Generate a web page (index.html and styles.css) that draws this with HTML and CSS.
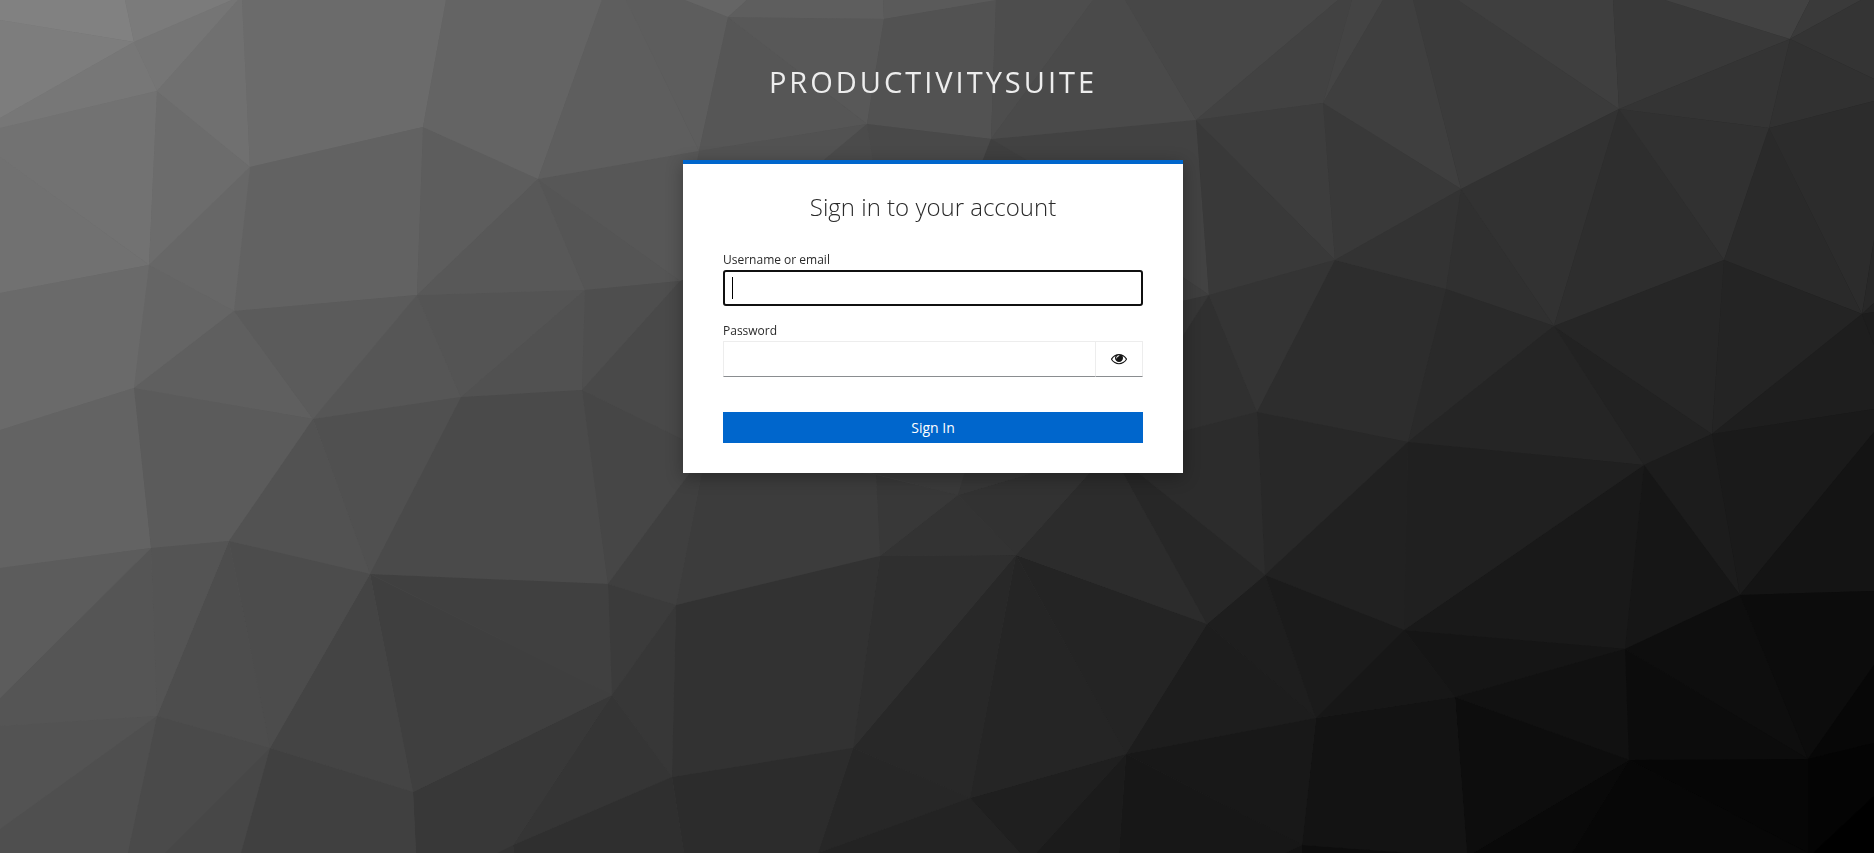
FILE: index.html
```html
<!DOCTYPE html>
<html lang="en">
<head>
<meta charset="utf-8">
<title>Sign in to ProductivitySuite</title>
<link rel="stylesheet" href="styles.css">
</head>
<body>
<svg class="backdrop" viewBox="0 0 1874 853" preserveAspectRatio="xMidYMid slice" aria-hidden="true">
  <!-- top left -->
  <polygon fill="#818181" points="0,0 125,0 134,42 0,20"/>
  <polygon fill="#7d7d7d" points="0,20 134,42 0,118"/>
  <polygon fill="#7b7b7b" points="125,0 134,42 232,0"/>
  <polygon fill="#757575" points="134,42 232,0 238,0 157,91"/>
  <polygon fill="#777777" points="134,42 157,91 0,128 0,118"/>
  <polygon fill="#727272" points="0,128 157,91 149,265 0,157"/>
  <polygon fill="#717171" points="0,157 149,265 0,293"/>
  <polygon fill="#6c6c6c" points="157,91 250,167 149,265"/>
  <polygon fill="#707070" points="157,91 238,0 242,0 250,167"/>
  <polygon fill="#6b6b6b" points="250,167 242,0 446,0 423,127"/>
  <polygon fill="#626262" points="250,167 423,127 417,295 234,311"/>
  <polygon fill="#676767" points="250,167 234,311 149,265"/>
  <polygon fill="#656565" points="149,265 234,311 134,388"/>
  <polygon fill="#6a6a6a" points="0,293 149,265 134,388 0,430"/>
  <polygon fill="#636363" points="0,430 134,388 151,548 0,568"/>
  <polygon fill="#5f5f5f" points="134,388 313,419 234,311"/>
  <polygon fill="#5b5b5b" points="234,311 313,419 417,295"/>
  <polygon fill="#5b5b5b" points="134,388 313,419 229,541 151,548"/>
  <polygon fill="#565656" points="313,419 417,295 461,397"/>
  <polygon fill="#505050" points="313,419 461,397 370,574"/>
  <polygon fill="#525252" points="313,419 370,574 229,541"/>
  <polygon fill="#545454" points="417,295 461,397 585,290"/>
  <polygon fill="#515151" points="585,290 461,397 582,390"/>
  <polygon fill="#5d5d5d" points="423,127 538,179 417,295"/>
  <polygon fill="#646464" points="423,127 446,0 602,0 538,179"/>
  <polygon fill="#585858" points="417,295 538,179 585,290"/>
  <polygon fill="#555555" points="538,179 585,290 680,281"/>
  <polygon fill="#575757" points="538,179 699,151 694,180 694,290 680,281"/>
  <polygon fill="#5e5e5e" points="538,179 602,0 626,0 699,151"/>
  <polygon fill="#5d5d5d" points="626,0 685,0 728,17 699,151"/>
  <polygon fill="#4e4e4e" points="585,290 680,281 582,390"/>
  <polygon fill="#494949" points="680,281 706,270 706,451 582,390"/>
  <polygon fill="#4a4a4a" points="461,397 582,390 608,584 370,574"/>
  <polygon fill="#464646" points="582,390 706,451 608,584"/>
  <!-- top centre -->
  <polygon fill="#565656" points="728,17 699,151 867,124"/>
  <polygon fill="#585858" points="728,17 884,19 867,124"/>
  <polygon fill="#656565" points="685,0 728,17 747,0"/>
  <polygon fill="#5e5e5e" points="747,0 728,17 884,19 883,0"/>
  <polygon fill="#5a5a5a" points="883,0 884,19 1000,0"/>
  <polygon fill="#525252" points="884,19 867,124 991,139 996,0"/>
  <polygon fill="#525252" points="699,151 867,124 800,180 694,180"/>
  <polygon fill="#4b4b4b" points="867,124 800,180 876,180"/>
  <polygon fill="#494949" points="867,124 991,139 975,180 876,180"/>
  <polygon fill="#3f3f3f" points="991,139 975,180 1080,180"/>
  <polygon fill="#424242" points="991,139 1196,120 1209,295 1165,265 1060,180"/>
  <polygon fill="#4d4d4d" points="996,0 1093,0 991,139"/>
  <polygon fill="#4a4a4a" points="991,139 1093,0 1125,0 1196,120"/>
  <polygon fill="#474747" points="1125,0 1338,0 1196,120"/>
  <polygon fill="#424242" points="1196,120 1338,0 1352,0 1323,103"/>
  <polygon fill="#444444" points="1352,0 1383,0 1323,103"/>
  <polygon fill="#3f3f3f" points="1323,103 1383,0 1413,0 1461,189"/>
  <polygon fill="#3d3d3d" points="1196,120 1323,103 1335,260"/>
  <polygon fill="#393939" points="1196,120 1335,260 1209,295"/>
  <polygon fill="#393939" points="1323,103 1461,189 1335,260"/>
  <polygon fill="#3e3e3e" points="1165,265 1209,295 1165,305"/>
  <polygon fill="#363636" points="1209,295 1165,305 1110,450"/>
  <polygon fill="#303030" points="1209,295 1257,412 1110,450"/>
  <polygon fill="#343434" points="1209,295 1335,260 1257,412"/>
  <polygon fill="#2d2d2d" points="1335,260 1446,289 1408,442 1257,412"/>
  <polygon fill="#333333" points="1335,260 1461,189 1446,289"/>
  <polygon fill="#303030" points="1461,189 1554,326 1446,289"/>
  <polygon fill="#282828" points="1257,412 1408,442 1265,575"/>
  <polygon fill="#2c2c2c" points="1257,412 1265,575 1110,450"/>
  <!-- top right -->
  <polygon fill="#3b3b3b" points="1413,0 1458,0 1619,109 1461,189"/>
  <polygon fill="#3f3f3f" points="1458,0 1613,0 1619,109"/>
  <polygon fill="#393939" points="1613,0 1665,0 1790,39 1619,109"/>
  <polygon fill="#424242" points="1665,0 1810,0 1790,39"/>
  <polygon fill="#3a3a3a" points="1810,0 1861,0 1790,39"/>
  <polygon fill="#343434" points="1861,0 1874,0 1874,79 1790,39"/>
  <polygon fill="#313131" points="1790,39 1874,79 1874,101 1769,128"/>
  <polygon fill="#343434" points="1790,39 1769,128 1619,109"/>
  <polygon fill="#323232" points="1461,189 1619,109 1554,326"/>
  <polygon fill="#2e2e2e" points="1619,109 1724,260 1554,326"/>
  <polygon fill="#313131" points="1619,109 1769,128 1724,260"/>
  <polygon fill="#2a2a2a" points="1769,128 1862,314 1724,260"/>
  <polygon fill="#2c2c2c" points="1769,128 1874,101 1874,240 1862,314"/>
  <polygon fill="#2a2a2a" points="1446,289 1554,326 1408,442"/>
  <polygon fill="#252525" points="1554,326 1408,442 1644,465"/>
  <polygon fill="#222222" points="1554,326 1644,465 1712,434"/>
  <polygon fill="#262626" points="1554,326 1724,260 1712,434"/>
  <polygon fill="#242424" points="1724,260 1862,314 1712,434"/>
  <polygon fill="#1e1e1e" points="1862,314 1874,345 1874,409 1712,434"/>
  <polygon fill="#282828" points="1862,314 1874,240 1874,303"/>
  <polygon fill="#222222" points="1862,314 1874,303 1874,312"/>
  <polygon fill="#1d1d1d" points="1862,314 1874,312 1874,345"/>
  <!-- bottom right -->
  <polygon fill="#1a1a1a" points="1712,434 1874,409 1874,432 1740,595"/>
  <polygon fill="#1c1c1c" points="1644,465 1712,434 1740,595"/>
  <polygon fill="#141414" points="1740,595 1874,432 1874,591"/>
  <polygon fill="#161616" points="1644,465 1740,595 1625,649"/>
  <polygon fill="#191919" points="1644,465 1625,649 1404,630"/>
  <polygon fill="#202020" points="1408,442 1644,465 1404,630"/>
  <polygon fill="#212121" points="1265,575 1408,442 1404,630"/>
  <polygon fill="#151515" points="1404,630 1625,649 1455,697"/>
  <polygon fill="#111111" points="1625,649 1455,697 1629,760"/>
  <polygon fill="#0e0e0e" points="1740,595 1625,649 1808,759"/>
  <polygon fill="#0c0c0c" points="1625,649 1629,760 1808,759"/>
  <polygon fill="#0c0c0c" points="1740,595 1874,591 1874,665 1808,759"/>
  <polygon fill="#070707" points="1808,759 1874,665 1874,743"/>
  <polygon fill="#040404" points="1808,759 1874,743 1874,796 1813,853 1808,853"/>
  <polygon fill="#000000" points="1874,796 1874,853 1813,853"/>
  <polygon fill="#060606" points="1629,760 1808,759 1808,853"/>
  <polygon fill="#070707" points="1629,760 1808,853 1572,853"/>
  <polygon fill="#090909" points="1629,760 1572,853 1473,853"/>
  <polygon fill="#0d0d0d" points="1455,697 1629,760 1473,853 1467,853"/>
  <polygon fill="#131313" points="1316,718 1455,697 1467,853 1410,853 1302,845"/>
  <polygon fill="#0d0d0d" points="1302,845 1410,853 1302,853"/>
  <polygon fill="#131313" points="1302,845 1302,853 1285,853"/>
  <polygon fill="#1e1e1e" points="1207,624 1265,575 1316,718"/>
  <polygon fill="#1d1d1d" points="1207,624 1316,718 1126,754"/>
  <polygon fill="#1b1b1b" points="1265,575 1404,630 1316,718"/>
  <polygon fill="#171717" points="1404,630 1455,697 1316,718"/>
  <polygon fill="#181818" points="1126,754 1316,718 1302,845"/>
  <polygon fill="#171717" points="1126,754 1302,845 1285,853 1119,853"/>
  <polygon fill="#1b1b1b" points="1126,754 1119,853 1036,853"/>
  <polygon fill="#1f1f1f" points="970,798 1126,754 1036,853 1020,853"/>
  <!-- bottom centre -->
  <polygon fill="#242424" points="1016,555 1207,624 1126,754"/>
  <polygon fill="#252525" points="1016,555 1126,754 970,798"/>
  <polygon fill="#282828" points="1016,555 853,748 970,798"/>
  <polygon fill="#272727" points="853,748 970,798 818,853"/>
  <polygon fill="#232323" points="970,798 818,853 1020,853"/>
  <polygon fill="#2c2c2c" points="1016,555 1110,450 1207,624"/>
  <polygon fill="#272727" points="1110,450 1207,624 1265,575"/>
  <polygon fill="#2f2f2f" points="880,556 1016,555 853,748"/>
  <polygon fill="#323232" points="958,495 1016,555 1110,450"/>
  <polygon fill="#333333" points="880,556 958,495 1016,555"/>
  <polygon fill="#383838" points="880,556 876,475 958,495"/>
  <polygon fill="#3a3a3a" points="840,465 970,465 958,495"/>
  <polygon fill="#363636" points="958,495 967,465 1060,465"/>
  <polygon fill="#3c3c3c" points="706,451 876,475 880,556 676,605"/>
  <polygon fill="#3f3f3f" points="608,584 706,451 676,605"/>
  <polygon fill="#404040" points="370,574 608,584 612,695"/>
  <polygon fill="#3b3b3b" points="608,584 676,605 612,695"/>
  <polygon fill="#373737" points="676,605 612,695 672,777"/>
  <polygon fill="#323232" points="676,605 880,556 853,748 672,777"/>
  <polygon fill="#353535" points="612,695 672,777 513,845"/>
  <polygon fill="#383838" points="612,695 513,845 497,853 416,853 413,792"/>
  <polygon fill="#3f3f3f" points="370,574 413,792 612,695"/>
  <polygon fill="#2c2c2c" points="672,777 853,748 818,853 684,853"/>
  <polygon fill="#2f2f2f" points="513,845 672,777 684,853 514,853"/>
  <polygon fill="#333333" points="513,845 514,853 497,853"/>
  <!-- bottom left -->
  <polygon fill="#444444" points="370,574 270,748 413,792"/>
  <polygon fill="#4c4c4c" points="229,541 370,574 270,748"/>
  <polygon fill="#4d4d4d" points="229,541 270,748 157,716"/>
  <polygon fill="#545454" points="151,548 229,541 157,716"/>
  <polygon fill="#555555" points="151,548 157,716 0,726 0,698"/>
  <polygon fill="#5c5c5c" points="0,568 151,548 0,698"/>
  <polygon fill="#535353" points="157,716 0,726 0,829"/>
  <polygon fill="#4f4f4f" points="157,716 0,829 0,853 128,853"/>
  <polygon fill="#4a4a4a" points="157,716 128,853 165,853 270,748"/>
  <polygon fill="#474747" points="270,748 165,853 241,853"/>
  <polygon fill="#404040" points="270,748 241,853 416,853 413,792"/>
</svg>

<div class="login">
  <header class="realm">ProductivitySuite</header>
  <main class="card">
    <h1 class="card-title">Sign in to your account</h1>
    <form class="form">
      <div class="field">
        <label class="label" for="username">Username or email</label>
        <div class="control focused">
          <input class="input" id="username" type="text" autocomplete="off">
          <span class="caret"></span>
        </div>
      </div>
      <div class="field">
        <label class="label" for="password">Password</label>
        <div class="input-group">
          <input class="input" id="password" type="password" autocomplete="off">
          <button class="toggle" type="button" aria-label="Show password">
            <svg class="eye" viewBox="0 384 1792 1152"><path d="M1664 960q-152-236-381-353 61 104 61 225 0 185-131.500 316.500t-316.500 131.500-316.500-131.500-131.500-316.500q0-121 61-225-229 117-381 353 133 205 333.500 326.500t434.500 121.500 434.500-121.500 333.500-326.500zm-720-384q0-20-14-34t-34-14q-125 0-214.500 89.500t-89.500 214.500q0 20 14 34t34 14 34-14 14-34q0-86 61-147t147-61q20 0 34-14t14-34zm848 384q0 34-20 69-140 230-376.500 368.500t-499.500 138.500-499.500-139-376.500-368q-20-35-20-69t20-69q140-229 376.500-368t499.500-139 499.500 139 376.500 368q20 35 20 69z"/></svg>
          </button>
        </div>
      </div>
      <button class="submit" type="button">Sign In</button>
    </form>
  </main>
</div>
</body>
</html>
```

FILE: styles.css
```css
* {
  box-sizing: border-box;
}

html,
body {
  height: 100%;
  margin: 0;
}

body {
  overflow: hidden;
  background: linear-gradient(135deg, #7a7a7a, #404040 50%, #050505);
  color: #2a2a2a;
  font-family: "Open Sans", sans-serif;
}

.backdrop {
  position: fixed;
  inset: 0;
  z-index: -1;
  width: 100%;
  height: 100%;
}

.login {
  display: flex;
  flex-direction: column;
  align-items: center;
  width: 500px;
  margin: 0 auto 0 683px;
}

.realm {
  height: 160px;
  padding-top: 63px;
  color: #ededed;
  font-size: 29px;
  line-height: 38px;
  letter-spacing: 3px;
  text-transform: uppercase;
  white-space: nowrap;
}

.card {
  width: 500px;
  height: 313px;
  padding: 27px 40px 0;
  border-top: 4px solid #06c;
  background: #fff;
  box-shadow: 0 4px 16px rgba(3, 3, 3, 0.3);
}

.card-title {
  margin: 0 0 29px;
  font-size: 24px;
  font-weight: 300;
  line-height: 31px;
  text-align: center;
}

.form {
  display: flex;
  flex-direction: column;
}

.field {
  display: flex;
  flex-direction: column;
  height: 71px;
}

.label {
  height: 19px;
  font-size: 12px;
  line-height: 18px;
}

.control {
  display: grid;
  align-items: center;
}

.control > * {
  grid-area: 1 / 1;
}

.input {
  width: 100%;
  min-width: 0;
  height: 36px;
  padding: 0 8px;
  border: 1px solid #ededed;
  border-bottom-color: #8a8d90;
  border-radius: 0;
  outline: none;
  background: #fff;
  font: 16px "Open Sans", sans-serif;
}

.focused .input {
  border: 2px solid #101010;
  border-radius: 3px;
}

.caret {
  width: 1px;
  height: 22px;
  margin-left: 9px;
  background: #000;
}

.input-group {
  display: flex;
}

.input-group .input {
  flex: 1;
}

.toggle {
  display: flex;
  align-items: center;
  justify-content: center;
  width: 48px;
  height: 36px;
  margin-left: -1px;
  padding: 1px 0 0;
  border: 1px solid #ededed;
  border-bottom-color: #8a8d90;
  background: #fff;
}

.eye {
  width: 16px;
  height: 10.300px;
  fill: #151515;
}

.submit {
  height: 31px;
  margin-top: 19px;
  padding: 0;
  border: 0;
  background: #06c;
  color: #fff;
  font: 14px/31px "Open Sans", sans-serif;
}
```
